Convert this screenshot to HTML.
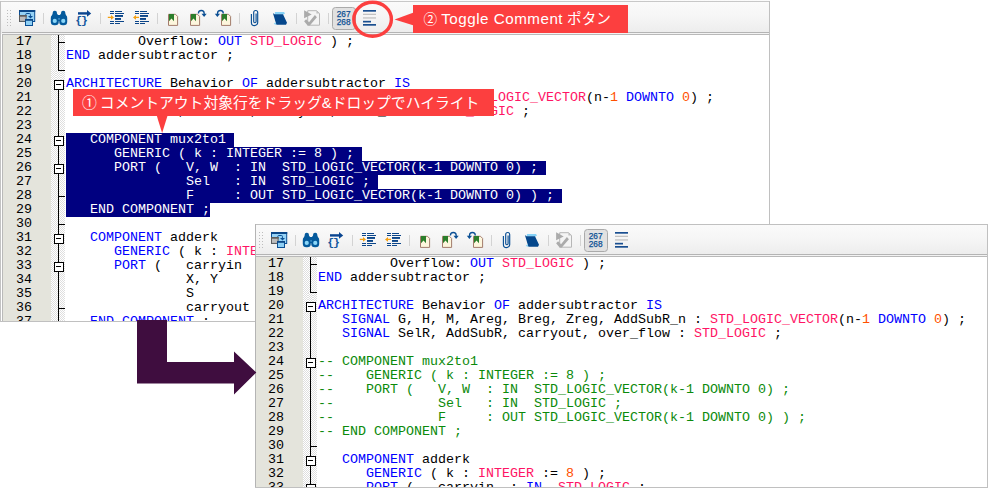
<!DOCTYPE html>
<html lang="ja"><head><meta charset="utf-8"><title>Toggle Comment</title>
<style>
html,body{margin:0;padding:0;background:#fff;}
body{width:988px;height:488px;position:relative;overflow:hidden;font-family:"Liberation Sans","Noto Sans CJK JP",sans-serif;}
.win{position:absolute;overflow:hidden;background:#fff;}
#w1{left:0;top:0;width:770px;height:322px;}
#w2{left:255px;top:224px;width:733px;height:264px;}
.inner{position:absolute;width:1000px;height:400px;}
.tb{position:absolute;left:0;top:0;width:1000px;height:34px;background:linear-gradient(#fbfbfb 0,#f6f6f6 45%,#ececec 100%);}
.tb:after{content:"";position:absolute;left:2px;top:32px;width:1000px;height:1px;background:#b4b4b4;}
.tb:before{content:"";position:absolute;left:0;top:33px;width:1000px;height:1px;background:#f3f3f3;}
.tbs{position:absolute;left:0;top:0;}
.ed{position:absolute;left:0;top:0;width:1000px;height:400px;}
.gut{position:absolute;left:2px;top:34px;width:49px;height:366px;background:#e4e4dc;box-sizing:border-box;border-left:1px solid #b9b9b9;}
.edtop{position:absolute;left:2px;top:34px;width:998px;height:1px;background:#b9b9b9;}
.fm{position:absolute;left:51px;top:35px;width:14px;height:366px;background:repeating-conic-gradient(#fff 0 25%,#dedede 0 50%) 0 0/2px 2px;}
.fl{position:absolute;left:58px;width:1px;background:#000;}
.fgap{position:absolute;left:56px;width:5px;height:9px;background:#fff;background:repeating-conic-gradient(#fff 0 25%,#dedede 0 50%) 1px 1px/2px 2px;}
.tick{position:absolute;left:58px;width:7px;height:1px;background:#000;}
.fb{position:absolute;left:54px;width:8px;height:8px;border:1px solid #000;background:#fff;}
.fb i{position:absolute;left:1px;top:3px;width:5px;height:1px;background:#000;}
.ln,.cl{position:absolute;font-family:"Liberation Mono",monospace;font-size:13.33px;line-height:14px;height:14px;white-space:pre;color:#000;}
.ln{left:16px;}
.cl{left:66px;}
.cl b{font-weight:normal;}
.k{color:#0000ff;}
.t{color:#ff1464;}
.n{color:#ff5000;}
.cl.s{color:#fff;}
.cl.c{color:#0b8a0b;}
.selbg{position:absolute;left:66px;height:14px;background:#000080;}
.bd{position:absolute;background:#b4b4b4;}
.co{position:absolute;background:#fc3f3f;color:#fff;white-space:nowrap;font-weight:400;}

</style></head>
<body>
<div id="w1" class="win">
<div class="inner" style="left:0;top:0">
<div class="tb"><svg class="tbs" width="400" height="34" viewBox="0 0 400 34">
<!-- grip -->
<g fill="#bdbdbd"><rect x="7" y="10" width="1" height="1"/><rect x="10" y="10" width="1" height="1"/><rect x="7" y="13" width="1" height="1"/><rect x="10" y="13" width="1" height="1"/><rect x="7" y="16" width="1" height="1"/><rect x="10" y="16" width="1" height="1"/><rect x="7" y="19" width="1" height="1"/><rect x="10" y="19" width="1" height="1"/><rect x="7" y="22" width="1" height="1"/><rect x="10" y="22" width="1" height="1"/><rect x="7" y="25" width="1" height="1"/><rect x="10" y="25" width="1" height="1"/></g>
<!-- separators -->
<g fill="#d3d3d3">
<rect x="43" y="13" width="1" height="11"/><rect x="100" y="13" width="1" height="11"/>
<rect x="157" y="13" width="1" height="11"/><rect x="239" y="13" width="1" height="11"/>
<rect x="296" y="13" width="1" height="11"/><rect x="328" y="13" width="1" height="11"/>
</g>
<!-- icon 1: dock window -->
<g>
<rect x="19.5" y="10.5" width="15.2" height="11" fill="#96d3f6" stroke="#0b4f94"/>
<rect x="19" y="10" width="16.2" height="2" fill="#0b4788"/>
<path d="M25.8 15.4 L25.8 14.4 Q25.8 13.5 26.7 13.5 L29.5 13.5 Q30.4 13.5 30.4 14.4 L30.4 17" fill="none" stroke="#0b4f94" stroke-width="1"/>
<path d="M28 16 L33 16 L30.5 18.6 Z" fill="#0b4f94"/>
<rect x="19.5" y="15.5" width="6.6" height="5.9" fill="#bdbdbd" stroke="#5c5c5c"/>
<rect x="19" y="15" width="7.6" height="1.7" fill="#5c5c5c"/>
<rect x="25.5" y="19.5" width="7" height="6" fill="#8fd0f5" stroke="#0b4f94"/>
<rect x="25" y="19" width="8" height="1.8" fill="#0b4788"/>
</g>
<!-- binoculars -->
<g fill="#045a9c">
<rect x="52.7" y="10.8" width="4.2" height="8" rx="1.9"/>
<rect x="61.1" y="10.8" width="4.2" height="8" rx="1.9"/>
<rect x="50.8" y="14.4" width="8" height="10.9" rx="3.6"/>
<rect x="59.2" y="14.4" width="8" height="10.9" rx="3.6"/>
<path d="M52 15.5 L53 13.2 L56.8 13.2 L58 15 L60 15 L61.2 13.2 L65 13.2 L66 15.5 L66 21 L52 21 Z"/>
</g>
<circle cx="54.75" cy="20.9" r="2.1" fill="#8ad6f8"/><circle cx="63.25" cy="20.9" r="2.1" fill="#8ad6f8"/>
<rect x="58.4" y="18.2" width="1.3" height="1.4" fill="#5aa6d8"/>
<!-- braces arrow -->
<g fill="#0a4590">
<rect x="78" y="12.2" width="10" height="2.4"/>
<path d="M87 9.9 L91.2 13.4 L87 16.8 Z"/>
</g>
<text x="75.2" y="24.3" font-family="Liberation Mono, monospace" font-size="11.5" font-weight="bold" fill="#14589f">{</text>
<text x="81.1" y="24.3" font-family="Liberation Mono, monospace" font-size="11.5" font-weight="bold" fill="#14589f">}</text>
<!-- indent -->
<g fill="#0b4589">
<rect x="110" y="11" width="4" height="1"/><rect x="115" y="11" width="7" height="1"/>
<rect x="110" y="13" width="4" height="1"/><rect x="115" y="13" width="9" height="1"/>
<rect x="115" y="15" width="8" height="1.9"/>
<rect x="115" y="18" width="6" height="1.9"/>
<rect x="110" y="21" width="4" height="1"/><rect x="115" y="21" width="9" height="1"/>
<rect x="110" y="23" width="4" height="1"/><rect x="115" y="23" width="5" height="1"/>
</g>
<path d="M107.8 16.8 L111 16.8 L111 15 L114 17.4 L111 19.8 L111 18 L107.8 18 Z" fill="#f5a012"/>
<g fill="#0b4589">
<rect x="135" y="11" width="4" height="1"/><rect x="140" y="11" width="7" height="1"/>
<rect x="135" y="13" width="4" height="1"/><rect x="140" y="13" width="9" height="1"/>
<rect x="140" y="15" width="8" height="1.9"/>
<rect x="140" y="18" width="6" height="1.9"/>
<rect x="135" y="21" width="4" height="1"/><rect x="140" y="21" width="9" height="1"/>
<rect x="135" y="23" width="4" height="1"/><rect x="140" y="23" width="5" height="1"/>
</g>
<path d="M139 16.8 L136 16.8 L136 15 L133 17.4 L136 19.8 L136 18 L139 18 Z" fill="#f5a012"/>
<!-- bookmarks -->
<g>
<path d="M168.5 14.3 L175.5 14.3 L177.6 16.4 L177.6 25.4 L168.5 25.4 Z" fill="#fdf6dd" stroke="#a27c6c"/>
<path d="M169 14 L174 14 L174 21.2 L171.5 18.6 L169 21.2 Z" fill="#2b7e2b"/>
<path d="M190.5 14.3 L197.5 14.3 L199.6 16.4 L199.6 25.4 L190.5 25.4 Z" fill="#fdf6dd" stroke="#a27c6c"/>
<path d="M191 14 L196 14 L196 21.2 L193.5 18.6 L191 21.2 Z" fill="#2b7e2b"/>
<path d="M198.4 13.4 A2.9 2.9 0 0 1 204.2 13.4 L204.2 14.2" fill="none" stroke="#0b4f94" stroke-width="1.3"/>
<path d="M201.5 13.7 L206.7 13.7 L204.1 17 Z" fill="#0b4f94"/>
<path d="M221.5 14.3 L228.5 14.3 L230.6 16.4 L230.6 25.4 L221.5 25.4 Z" fill="#fdf6dd" stroke="#a27c6c"/>
<path d="M222 14 L227 14 L227 21.2 L224.5 18.6 L222 21.2 Z" fill="#2b7e2b"/>
<path d="M223.3 13.4 A2.9 2.9 0 0 0 217.5 13.4 L217.5 14.2" fill="none" stroke="#0b4f94" stroke-width="1.3"/>
<path d="M214.8 13.7 L220 13.7 L217.4 17 Z" fill="#0b4f94"/>
</g>
<!-- paperclip -->
<path d="M256.1 13.6 L256.1 21.5 A1.2 1.2 0 0 1 253.7 21.5 L253.7 12.5 A2 2 0 0 1 257.7 12.5 L257.7 22.4 A3.15 3.15 0 0 1 251.4 22.4 L251.4 14.1" fill="none" stroke="#0a4f94" stroke-width="1.15"/>
<!-- scroll -->
<path d="M275.1 12.1 L284 12.1 L285 13.6 L283.5 14.5 L274.4 14.5 Z" fill="#86d2f7"/>
<path d="M272.9 13.1 L274.4 14.35 L283 14.35 L287 22.7 L286 24.7 L276.4 24.7 Z" fill="#05478c"/>
<path d="M273.9 23.5 L275.6 22.2 L276.4 24.7 L274.9 24.5 Z" fill="#86d2f7"/>
<!-- gray disabled icon -->
<g>
<path d="M307.7 10.7 L316.6 10.7 L319.5 13.4 L319.5 25.2 L307.7 25.2 Z" fill="#f4f4f4" stroke="#b6b6b6"/>
<path d="M316.4 10.4 L319.8 13.6 L316.4 13.6 Z" fill="#c2c2c2"/>
<path d="M304.1 10.2 L311.7 14.4 L304.1 18.3 Z" fill="#ababab"/>
<path d="M304.1 21.25 L306.1 19.3 L309 22.2 L314.9 15.1 L316.9 17.3 L309.8 25.6 L307.6 25.6 Z" fill="#ababab"/>
</g>
<!-- 267/268 button -->
<rect x="332.5" y="7.5" width="23" height="22" rx="3" fill="#e1e1e1" stroke="#aaaaaa"/>
<text x="336.7" y="16.9" font-family="Liberation Sans, sans-serif" font-size="8.4" fill="#0b4f94" stroke="#0b4f94" stroke-width="0.25" textLength="13.8" lengthAdjust="spacingAndGlyphs">267</text>
<text x="336.7" y="25.1" font-family="Liberation Sans, sans-serif" font-size="8.4" fill="#0b4f94" stroke="#0b4f94" stroke-width="0.25" textLength="13.8" lengthAdjust="spacingAndGlyphs">268</text>
<!-- toggle comment -->
<rect x="363" y="10" width="13" height="1.7" fill="#1a4f90"/>
<rect x="363" y="13.7" width="13" height="1.3" fill="#c2c2c2"/>
<rect x="363" y="17.3" width="13" height="1.3" fill="#c2c2c2"/>
<rect x="363" y="20.8" width="8" height="1.7" fill="#1a4f90"/>
<rect x="363" y="24" width="13" height="1.7" fill="#1a4f90"/>
</svg>
</div>
<div class="ed">
<div class="gut"></div><div class="fm"></div><div class="edtop"></div>
<div class="fl" style="top:35px;height:300px"></div>
<div class="fgap" style="top:71px"></div>
<div class="tick" style="top:42px"></div>
<div class="tick" style="top:224px"></div>
<div class="tick" style="top:308px"></div>
<div class="tick" style="top:70px"></div>
<div class="tick" style="top:196px"></div>
<div class="fb" style="top:80px"><i></i></div>
<div class="fb" style="top:136px"><i></i></div>
<div class="fb" style="top:234px"><i></i></div>
<div class="fb" style="top:262px"><i></i></div>
<div class="fb" style="top:164px"><i></i></div>
<div class="selbg" style="top:133px;width:168px"></div>
<div class="selbg" style="top:147px;width:296px"></div>
<div class="selbg" style="top:161px;width:480px"></div>
<div class="selbg" style="top:175px;width:312px"></div>
<div class="selbg" style="top:189px;width:496px"></div>
<div class="selbg" style="top:203px;width:144px"></div>
<div class="ln" style="top:35px">17</div>
<div class="ln" style="top:49px">18</div>
<div class="ln" style="top:63px">19</div>
<div class="ln" style="top:77px">20</div>
<div class="ln" style="top:91px">21</div>
<div class="ln" style="top:105px">22</div>
<div class="ln" style="top:119px">23</div>
<div class="ln" style="top:133px">24</div>
<div class="ln" style="top:147px">25</div>
<div class="ln" style="top:161px">26</div>
<div class="ln" style="top:175px">27</div>
<div class="ln" style="top:189px">28</div>
<div class="ln" style="top:203px">29</div>
<div class="ln" style="top:217px">30</div>
<div class="ln" style="top:231px">31</div>
<div class="ln" style="top:245px">32</div>
<div class="ln" style="top:259px">33</div>
<div class="ln" style="top:273px">34</div>
<div class="ln" style="top:287px">35</div>
<div class="ln" style="top:301px">36</div>
<div class="ln" style="top:315px">37</div>
<div class="cl" style="top:35px">         Overflow: <b class="k">OUT</b> <b class="t">STD_LOGIC</b> ) ;</div>
<div class="cl" style="top:49px"><b class="k">END</b> addersubtractor ;</div>
<div class="cl" style="top:77px"><b class="k">ARCHITECTURE</b> Behavior <b class="k">OF</b> addersubtractor <b class="k">IS</b></div>
<div class="cl" style="top:91px">   <b class="k">SIGNAL</b> G, H, M, Areg, Breg, Zreg, AddSubR_n : <b class="t">STD_LOGIC_VECTOR</b>(n-<b class="n">1</b> <b class="k">DOWNTO</b> <b class="n">0</b>) ;</div>
<div class="cl" style="top:105px">   <b class="k">SIGNAL</b> SelR, AddSubR, carryout, over_flow : <b class="t">STD_LOGIC</b> ;</div>
<div class="cl s" style="top:133px">   COMPONENT mux2to1</div>
<div class="cl s" style="top:147px">      GENERIC ( k : INTEGER := 8 ) ;</div>
<div class="cl s" style="top:161px">      PORT (   V, W  : IN  STD_LOGIC_VECTOR(k-1 DOWNTO 0) ;</div>
<div class="cl s" style="top:175px">               Sel   : IN  STD_LOGIC ;</div>
<div class="cl s" style="top:189px">               F     : OUT STD_LOGIC_VECTOR(k-1 DOWNTO 0) ) ;</div>
<div class="cl s" style="top:203px">   END COMPONENT ;</div>
<div class="cl" style="top:231px">   <b class="k">COMPONENT</b> adderk</div>
<div class="cl" style="top:245px">      <b class="k">GENERIC</b> ( k : <b class="t">INTEGER</b> := <b class="n">8</b> ) ;</div>
<div class="cl" style="top:259px">      <b class="k">PORT</b> (   carryin  : <b class="k">IN</b>  <b class="t">STD_LOGIC</b> ;</div>
<div class="cl" style="top:273px">               X, Y     : <b class="k">IN</b>  <b class="t">STD_LOGIC_VECTOR</b>(k-<b class="n">1</b> <b class="k">DOWNTO</b> <b class="n">0</b>) ;</div>
<div class="cl" style="top:287px">               S        : <b class="k">OUT</b> <b class="t">STD_LOGIC_VECTOR</b>(k-<b class="n">1</b> <b class="k">DOWNTO</b> <b class="n">0</b>) ;</div>
<div class="cl" style="top:301px">               carryout : <b class="k">OUT</b> <b class="t">STD_LOGIC</b> ) ;</div>
<div class="cl" style="top:315px">   <b class="k">END</b> <b class="k">COMPONENT</b> ;</div>
</div>
</div>
</div>
<div id="w2" class="win">
<div class="inner" style="left:-3px;top:-2px">
<div class="tb"><svg class="tbs" width="400" height="34" viewBox="0 0 400 34">
<!-- grip -->
<g fill="#bdbdbd"><rect x="7" y="10" width="1" height="1"/><rect x="10" y="10" width="1" height="1"/><rect x="7" y="13" width="1" height="1"/><rect x="10" y="13" width="1" height="1"/><rect x="7" y="16" width="1" height="1"/><rect x="10" y="16" width="1" height="1"/><rect x="7" y="19" width="1" height="1"/><rect x="10" y="19" width="1" height="1"/><rect x="7" y="22" width="1" height="1"/><rect x="10" y="22" width="1" height="1"/><rect x="7" y="25" width="1" height="1"/><rect x="10" y="25" width="1" height="1"/></g>
<!-- separators -->
<g fill="#d3d3d3">
<rect x="43" y="13" width="1" height="11"/><rect x="100" y="13" width="1" height="11"/>
<rect x="157" y="13" width="1" height="11"/><rect x="239" y="13" width="1" height="11"/>
<rect x="296" y="13" width="1" height="11"/><rect x="328" y="13" width="1" height="11"/>
</g>
<!-- icon 1: dock window -->
<g>
<rect x="19.5" y="10.5" width="15.2" height="11" fill="#96d3f6" stroke="#0b4f94"/>
<rect x="19" y="10" width="16.2" height="2" fill="#0b4788"/>
<path d="M25.8 15.4 L25.8 14.4 Q25.8 13.5 26.7 13.5 L29.5 13.5 Q30.4 13.5 30.4 14.4 L30.4 17" fill="none" stroke="#0b4f94" stroke-width="1"/>
<path d="M28 16 L33 16 L30.5 18.6 Z" fill="#0b4f94"/>
<rect x="19.5" y="15.5" width="6.6" height="5.9" fill="#bdbdbd" stroke="#5c5c5c"/>
<rect x="19" y="15" width="7.6" height="1.7" fill="#5c5c5c"/>
<rect x="25.5" y="19.5" width="7" height="6" fill="#8fd0f5" stroke="#0b4f94"/>
<rect x="25" y="19" width="8" height="1.8" fill="#0b4788"/>
</g>
<!-- binoculars -->
<g fill="#045a9c">
<rect x="52.7" y="10.8" width="4.2" height="8" rx="1.9"/>
<rect x="61.1" y="10.8" width="4.2" height="8" rx="1.9"/>
<rect x="50.8" y="14.4" width="8" height="10.9" rx="3.6"/>
<rect x="59.2" y="14.4" width="8" height="10.9" rx="3.6"/>
<path d="M52 15.5 L53 13.2 L56.8 13.2 L58 15 L60 15 L61.2 13.2 L65 13.2 L66 15.5 L66 21 L52 21 Z"/>
</g>
<circle cx="54.75" cy="20.9" r="2.1" fill="#8ad6f8"/><circle cx="63.25" cy="20.9" r="2.1" fill="#8ad6f8"/>
<rect x="58.4" y="18.2" width="1.3" height="1.4" fill="#5aa6d8"/>
<!-- braces arrow -->
<g fill="#0a4590">
<rect x="78" y="12.2" width="10" height="2.4"/>
<path d="M87 9.9 L91.2 13.4 L87 16.8 Z"/>
</g>
<text x="75.2" y="24.3" font-family="Liberation Mono, monospace" font-size="11.5" font-weight="bold" fill="#14589f">{</text>
<text x="81.1" y="24.3" font-family="Liberation Mono, monospace" font-size="11.5" font-weight="bold" fill="#14589f">}</text>
<!-- indent -->
<g fill="#0b4589">
<rect x="110" y="11" width="4" height="1"/><rect x="115" y="11" width="7" height="1"/>
<rect x="110" y="13" width="4" height="1"/><rect x="115" y="13" width="9" height="1"/>
<rect x="115" y="15" width="8" height="1.9"/>
<rect x="115" y="18" width="6" height="1.9"/>
<rect x="110" y="21" width="4" height="1"/><rect x="115" y="21" width="9" height="1"/>
<rect x="110" y="23" width="4" height="1"/><rect x="115" y="23" width="5" height="1"/>
</g>
<path d="M107.8 16.8 L111 16.8 L111 15 L114 17.4 L111 19.8 L111 18 L107.8 18 Z" fill="#f5a012"/>
<g fill="#0b4589">
<rect x="135" y="11" width="4" height="1"/><rect x="140" y="11" width="7" height="1"/>
<rect x="135" y="13" width="4" height="1"/><rect x="140" y="13" width="9" height="1"/>
<rect x="140" y="15" width="8" height="1.9"/>
<rect x="140" y="18" width="6" height="1.9"/>
<rect x="135" y="21" width="4" height="1"/><rect x="140" y="21" width="9" height="1"/>
<rect x="135" y="23" width="4" height="1"/><rect x="140" y="23" width="5" height="1"/>
</g>
<path d="M139 16.8 L136 16.8 L136 15 L133 17.4 L136 19.8 L136 18 L139 18 Z" fill="#f5a012"/>
<!-- bookmarks -->
<g>
<path d="M168.5 14.3 L175.5 14.3 L177.6 16.4 L177.6 25.4 L168.5 25.4 Z" fill="#fdf6dd" stroke="#a27c6c"/>
<path d="M169 14 L174 14 L174 21.2 L171.5 18.6 L169 21.2 Z" fill="#2b7e2b"/>
<path d="M190.5 14.3 L197.5 14.3 L199.6 16.4 L199.6 25.4 L190.5 25.4 Z" fill="#fdf6dd" stroke="#a27c6c"/>
<path d="M191 14 L196 14 L196 21.2 L193.5 18.6 L191 21.2 Z" fill="#2b7e2b"/>
<path d="M198.4 13.4 A2.9 2.9 0 0 1 204.2 13.4 L204.2 14.2" fill="none" stroke="#0b4f94" stroke-width="1.3"/>
<path d="M201.5 13.7 L206.7 13.7 L204.1 17 Z" fill="#0b4f94"/>
<path d="M221.5 14.3 L228.5 14.3 L230.6 16.4 L230.6 25.4 L221.5 25.4 Z" fill="#fdf6dd" stroke="#a27c6c"/>
<path d="M222 14 L227 14 L227 21.2 L224.5 18.6 L222 21.2 Z" fill="#2b7e2b"/>
<path d="M223.3 13.4 A2.9 2.9 0 0 0 217.5 13.4 L217.5 14.2" fill="none" stroke="#0b4f94" stroke-width="1.3"/>
<path d="M214.8 13.7 L220 13.7 L217.4 17 Z" fill="#0b4f94"/>
</g>
<!-- paperclip -->
<path d="M256.1 13.6 L256.1 21.5 A1.2 1.2 0 0 1 253.7 21.5 L253.7 12.5 A2 2 0 0 1 257.7 12.5 L257.7 22.4 A3.15 3.15 0 0 1 251.4 22.4 L251.4 14.1" fill="none" stroke="#0a4f94" stroke-width="1.15"/>
<!-- scroll -->
<path d="M275.1 12.1 L284 12.1 L285 13.6 L283.5 14.5 L274.4 14.5 Z" fill="#86d2f7"/>
<path d="M272.9 13.1 L274.4 14.35 L283 14.35 L287 22.7 L286 24.7 L276.4 24.7 Z" fill="#05478c"/>
<path d="M273.9 23.5 L275.6 22.2 L276.4 24.7 L274.9 24.5 Z" fill="#86d2f7"/>
<!-- gray disabled icon -->
<g>
<path d="M307.7 10.7 L316.6 10.7 L319.5 13.4 L319.5 25.2 L307.7 25.2 Z" fill="#f4f4f4" stroke="#b6b6b6"/>
<path d="M316.4 10.4 L319.8 13.6 L316.4 13.6 Z" fill="#c2c2c2"/>
<path d="M304.1 10.2 L311.7 14.4 L304.1 18.3 Z" fill="#ababab"/>
<path d="M304.1 21.25 L306.1 19.3 L309 22.2 L314.9 15.1 L316.9 17.3 L309.8 25.6 L307.6 25.6 Z" fill="#ababab"/>
</g>
<!-- 267/268 button -->
<rect x="332.5" y="7.5" width="23" height="22" rx="3" fill="#e1e1e1" stroke="#aaaaaa"/>
<text x="336.7" y="16.9" font-family="Liberation Sans, sans-serif" font-size="8.4" fill="#0b4f94" stroke="#0b4f94" stroke-width="0.25" textLength="13.8" lengthAdjust="spacingAndGlyphs">267</text>
<text x="336.7" y="25.1" font-family="Liberation Sans, sans-serif" font-size="8.4" fill="#0b4f94" stroke="#0b4f94" stroke-width="0.25" textLength="13.8" lengthAdjust="spacingAndGlyphs">268</text>
<!-- toggle comment -->
<rect x="363" y="10" width="13" height="1.7" fill="#1a4f90"/>
<rect x="363" y="13.7" width="13" height="1.3" fill="#c2c2c2"/>
<rect x="363" y="17.3" width="13" height="1.3" fill="#c2c2c2"/>
<rect x="363" y="20.8" width="8" height="1.7" fill="#1a4f90"/>
<rect x="363" y="24" width="13" height="1.7" fill="#1a4f90"/>
</svg>
</div>
<div class="ed">
<div class="gut"></div><div class="fm"></div><div class="edtop"></div>
<div class="fl" style="top:35px;height:300px"></div>
<div class="fgap" style="top:71px"></div>
<div class="tick" style="top:42px"></div>
<div class="tick" style="top:224px"></div>
<div class="tick" style="top:308px"></div>
<div class="tick" style="top:70px"></div>
<div class="fb" style="top:80px"><i></i></div>
<div class="fb" style="top:136px"><i></i></div>
<div class="fb" style="top:234px"><i></i></div>
<div class="fb" style="top:262px"><i></i></div>
<div class="ln" style="top:35px">17</div>
<div class="ln" style="top:49px">18</div>
<div class="ln" style="top:63px">19</div>
<div class="ln" style="top:77px">20</div>
<div class="ln" style="top:91px">21</div>
<div class="ln" style="top:105px">22</div>
<div class="ln" style="top:119px">23</div>
<div class="ln" style="top:133px">24</div>
<div class="ln" style="top:147px">25</div>
<div class="ln" style="top:161px">26</div>
<div class="ln" style="top:175px">27</div>
<div class="ln" style="top:189px">28</div>
<div class="ln" style="top:203px">29</div>
<div class="ln" style="top:217px">30</div>
<div class="ln" style="top:231px">31</div>
<div class="ln" style="top:245px">32</div>
<div class="ln" style="top:259px">33</div>
<div class="ln" style="top:273px">34</div>
<div class="ln" style="top:287px">35</div>
<div class="ln" style="top:301px">36</div>
<div class="ln" style="top:315px">37</div>
<div class="cl" style="top:35px">         Overflow: <b class="k">OUT</b> <b class="t">STD_LOGIC</b> ) ;</div>
<div class="cl" style="top:49px"><b class="k">END</b> addersubtractor ;</div>
<div class="cl" style="top:77px"><b class="k">ARCHITECTURE</b> Behavior <b class="k">OF</b> addersubtractor <b class="k">IS</b></div>
<div class="cl" style="top:91px">   <b class="k">SIGNAL</b> G, H, M, Areg, Breg, Zreg, AddSubR_n : <b class="t">STD_LOGIC_VECTOR</b>(n-<b class="n">1</b> <b class="k">DOWNTO</b> <b class="n">0</b>) ;</div>
<div class="cl" style="top:105px">   <b class="k">SIGNAL</b> SelR, AddSubR, carryout, over_flow : <b class="t">STD_LOGIC</b> ;</div>
<div class="cl c" style="top:133px">-- COMPONENT mux2to1</div>
<div class="cl c" style="top:147px">--    GENERIC ( k : INTEGER := 8 ) ;</div>
<div class="cl c" style="top:161px">--    PORT (   V, W  : IN  STD_LOGIC_VECTOR(k-1 DOWNTO 0) ;</div>
<div class="cl c" style="top:175px">--             Sel   : IN  STD_LOGIC ;</div>
<div class="cl c" style="top:189px">--             F     : OUT STD_LOGIC_VECTOR(k-1 DOWNTO 0) ) ;</div>
<div class="cl c" style="top:203px">-- END COMPONENT ;</div>
<div class="cl" style="top:231px">   <b class="k">COMPONENT</b> adderk</div>
<div class="cl" style="top:245px">      <b class="k">GENERIC</b> ( k : <b class="t">INTEGER</b> := <b class="n">8</b> ) ;</div>
<div class="cl" style="top:259px">      <b class="k">PORT</b> (   carryin  : <b class="k">IN</b>  <b class="t">STD_LOGIC</b> ;</div>
<div class="cl" style="top:273px">               X, Y     : <b class="k">IN</b>  <b class="t">STD_LOGIC_VECTOR</b>(k-<b class="n">1</b> <b class="k">DOWNTO</b> <b class="n">0</b>) ;</div>
<div class="cl" style="top:287px">               S        : <b class="k">OUT</b> <b class="t">STD_LOGIC_VECTOR</b>(k-<b class="n">1</b> <b class="k">DOWNTO</b> <b class="n">0</b>) ;</div>
<div class="cl" style="top:301px">               carryout : <b class="k">OUT</b> <b class="t">STD_LOGIC</b> ) ;</div>
<div class="cl" style="top:315px">   <b class="k">END</b> <b class="k">COMPONENT</b> ;</div>
</div>
</div>
</div>
<!-- window 1 borders -->
<div class="bd" style="left:0px;top:1px;width:770px;height:1px;background:#c8c8c8"></div>
<div class="bd" style="left:0px;top:1px;width:1px;height:321px;background:#c2c2c2"></div>
<div class="bd" style="left:769px;top:1px;width:1px;height:223px;background:#c0c0c0"></div>
<div class="bd" style="left:1px;top:321px;width:254px;height:1px;background:#c0c0c0"></div>
<!-- window 2 borders -->
<div class="bd" style="left:255px;top:224px;width:733px;height:1px;background:#c0c0c0"></div>
<div class="bd" style="left:255px;top:224px;width:1px;height:264px;background:#b4b4b4"></div>
<div class="bd" style="left:987px;top:224px;width:1px;height:264px;background:#c0c0c0"></div>
<div class="bd" style="left:255px;top:487px;width:733px;height:1px;background:#c0c0c0"></div>
<!-- overlays: callouts, circle, arrow -->
<svg style="position:absolute;left:0;top:0" width="988" height="488" viewBox="0 0 988 488">
<path d="M137 320 L167 320 L167 362 L234 362 L234 351.6 L256.3 372.5 L234 394.4 L234 383.4 L137 383.4 Z" fill="#3f0d3f"/>
<ellipse cx="372.6" cy="19.3" rx="18.8" ry="17" fill="none" stroke="#fc3f3f" stroke-width="3.4"/>
<path d="M394.6 19.4 L413 12.8 L413 25.2 Z" fill="#fc3f3f"/>
<path d="M156.7 115.5 L167.6 115.5 L162.1 133 Z" fill="#fc3f3f"/>
</svg>
<div class="co" style="left:413px;top:5px;width:215px;height:27.5px;"><span style="position:absolute;left:10.6px;top:3px;font-size:14.6px;line-height:21px;"><span style="font-size:13.6px">②</span> <span style="font-size:15.2px;letter-spacing:.5px">Toggle Comment</span> ポタン</span></div>
<div class="co" style="left:72.6px;top:89px;width:421px;height:27px;"><span style="position:absolute;left:9.5px;top:4px;font-size:14.81px;line-height:21px;">①<span style="letter-spacing:-1.2px"> </span>コメントアウト対象行をドラッグ&amp;ドロップでハイライト</span></div>

</body></html>
